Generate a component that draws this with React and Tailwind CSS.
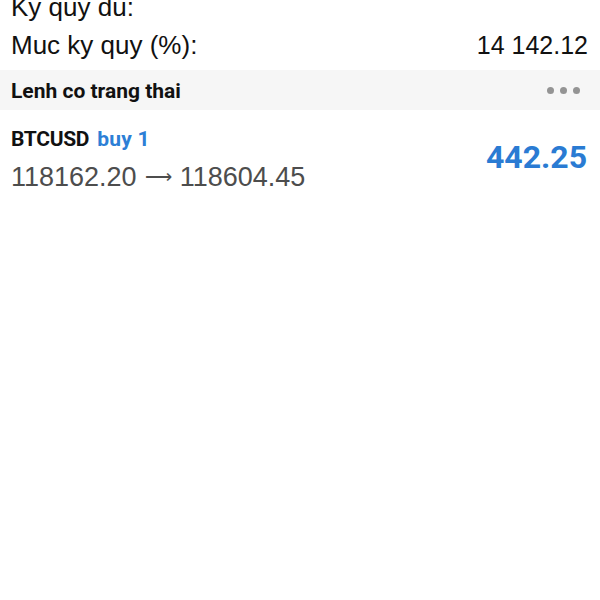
export default function App() {
  const cond = { fontFamily: "Roboto, sans-serif" };
  return (
    <div className="w-[600px] h-[600px] bg-white overflow-hidden font-['Liberation_Sans',sans-serif]">
      <div className="-mt-[12px]">
        <div className="flex justify-between h-[38px] leading-[38px] pl-[11px] pr-[12px] text-[26px] text-[#111]">
          <span>Ky quy du:</span>
        </div>
        <div className="flex justify-between items-baseline h-[38px] leading-[38px] pl-[11px] pr-[12px] text-[26px] text-[#111]">
          <span>Muc ky quy (%):</span>
          <span className="text-[25px]">14 142.12</span>
        </div>
      </div>
      <div className="mt-[6px] h-[40px] bg-[#f6f6f6] flex items-center justify-between pl-[11px] pt-[4px]">
        <span style={cond} className="font-bold text-[21px] text-[#111]">Lenh co trang thai</span>
        <div className="flex gap-[6px] pr-[20px] -mt-[4px]">
          <span className="w-[7px] h-[7px] rounded-full bg-[#949494]" />
          <span className="w-[7px] h-[7px] rounded-full bg-[#949494]" />
          <span className="w-[7px] h-[7px] rounded-full bg-[#949494]" />
        </div>
      </div>
      <div className="flex justify-between items-start pl-[11px] pr-[13px]">
        <div className="flex flex-col pt-[15px]">
          <div style={cond} className="font-bold text-[21px] leading-[28px] flex gap-[8px]">
            <span className="text-[#111] tracking-[-0.3px]">BTCUSD</span>
            <span className="text-[#2d7fd6] tracking-[0.2px]">buy 1</span>
          </div>
          <div className="mt-[5px] text-[27px] leading-[38px] text-[#4d4d4d] flex items-center">
            <span>118162.20</span>
            <span className="font-['Roboto'] text-[19px] mx-[8px] leading-[38px]">⟶</span>
            <span>118604.45</span>
          </div>
        </div>
        <span style={cond} className="font-bold text-[32px] leading-[40px] text-[#2a7bd3] pt-[27px]">442.25</span>
      </div>
    </div>
  );
}
